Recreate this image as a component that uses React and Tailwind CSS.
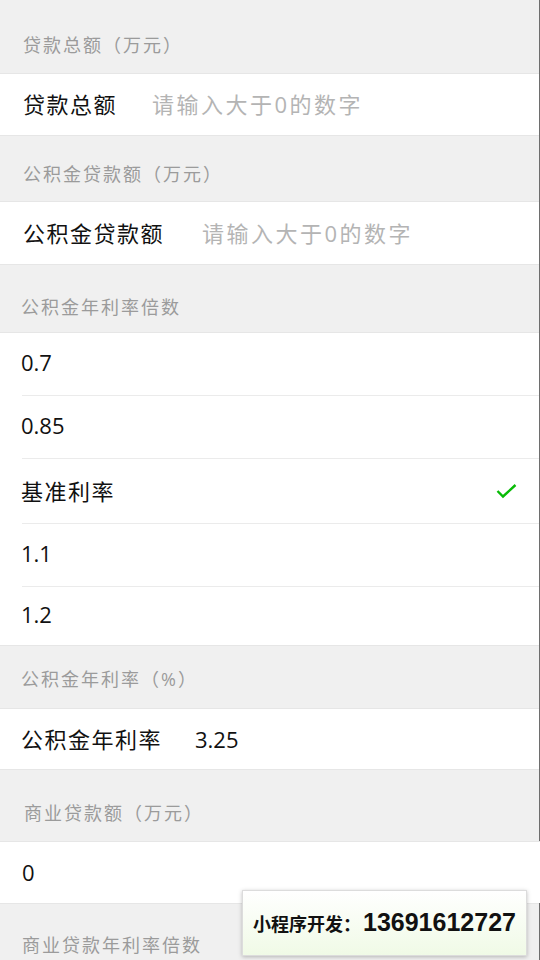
import React from "react";

const font = { fontFamily: '"Open Sans", "Noto Sans CJK SC", sans-serif' };

function Header({ children, cls }) {
  return (
    <div className={`text-[18px] leading-[24px] tracking-[2px] text-[#9b9b9b] ${cls}`}>{children}</div>
  );
}

function Check() {
  return (
    <svg width="22" height="16" viewBox="0 0 22 16" className="block">
      <polyline points="1.5,8 7,13.5 19.5,2" fill="none" stroke="#09bb07" strokeWidth="2.4" />
    </svg>
  );
}

export default function App() {
  const options = [
    { t: "0.7", h: "h-[62px]", cjk: false },
    { t: "0.85", h: "h-[62px]", cjk: false },
    { t: "基准利率", h: "h-[64px]", cjk: true },
    { t: "1.1", h: "h-[62px]", cjk: false },
    { t: "1.2", h: "h-[58px]", cjk: false },
  ];
  return (
    <div className="relative w-[540px] h-[960px] overflow-hidden bg-[#f0f0f0]" style={font}>
      <div className="w-[540px] border-r border-[#6e6e6e] min-h-[960px]">
        <Header cls="h-[73px] pt-[33px] pl-[23px]">贷款总额（万元）</Header>
        <div className="h-[62px] bg-white flex items-center pl-[23px] border-t border-[#e6e6e6]">
          <span className="text-[22px] tracking-[1.5px] text-[#111] mr-[35px]">贷款总额</span>
          <span className="text-[22px] tracking-[2.5px] text-[#b4b4b4]">请输入大于0的数字</span>
        </div>
        <Header cls="h-[66px] pt-[26px] pl-[23px] border-t border-[#e6e6e6]">公积金贷款额（万元）</Header>
        <div className="h-[63px] bg-white flex items-center pl-[23px] border-t border-[#e6e6e6]">
          <span className="text-[22px] tracking-[1.5px] text-[#111] mr-[38px]">公积金贷款额</span>
          <span className="text-[22px] tracking-[2.5px] text-[#b4b4b4]">请输入大于0的数字</span>
        </div>
        <Header cls="h-[68px] pt-[30px] pl-[21px] border-t border-[#e6e6e6]">公积金年利率倍数</Header>
        <div className="bg-white border-t border-[#e6e6e6]">
          {options.map((o, i) => (
            <div key={o.t}>
              {i > 0 && <div className="ml-[22px] h-px bg-[#ebebeb]" />}
              <div className={`flex items-center justify-between pl-[21px] pr-[21px] ${o.h}`}>
                <span className={`text-[22px] text-[#111] ${o.cjk ? "tracking-[1.5px]" : "pb-[3px]"}`}>{o.t}</span>
                {o.cjk && <Check />}
              </div>
            </div>
          ))}
        </div>
        <Header cls="h-[63px] pt-[21px] pl-[21px] border-t border-[#e6e6e6]">公积金年利率（%）</Header>
        <div className="h-[61px] bg-white flex items-center pl-[21px] border-t border-[#e6e6e6]">
          <span className="text-[22px] tracking-[1.5px] text-[#111] mr-[33px]">公积金年利率</span>
          <span className="text-[22px] text-[#111]">3.25</span>
        </div>
        <Header cls="h-[72px] pt-[31px] pl-[24px] border-t border-[#e6e6e6]">商业贷款额（万元）</Header>
        <div className="h-[62px] bg-white flex items-center pl-[22px] border-t border-[#e6e6e6] -mr-px relative">
          <span className="text-[22px] text-[#111]">0</span>
        </div>
        <Header cls="h-[60px] pt-[29px] pl-[22px] border-t border-[#e6e6e6]">商业贷款年利率倍数</Header>
      </div>

      <div className="absolute left-[242px] top-[890px] w-[285px] h-[66px] flex items-center pl-[10px] bg-gradient-to-b from-white to-[#f0fae6] border border-[#dcdcdc] shadow-[0_1px_4px_rgba(0,0,0,0.25)]">
        <span className="text-[18px] font-bold text-[#111]" style={{ fontFamily: '"Noto Sans CJK SC", sans-serif' }}>小程序开发：</span>
        <span className="text-[25px] font-bold text-[#111] ml-[2px]" style={{ fontFamily: '"Liberation Sans", Arial, sans-serif' }}>13691612727</span>
      </div>
    </div>
  );
}
